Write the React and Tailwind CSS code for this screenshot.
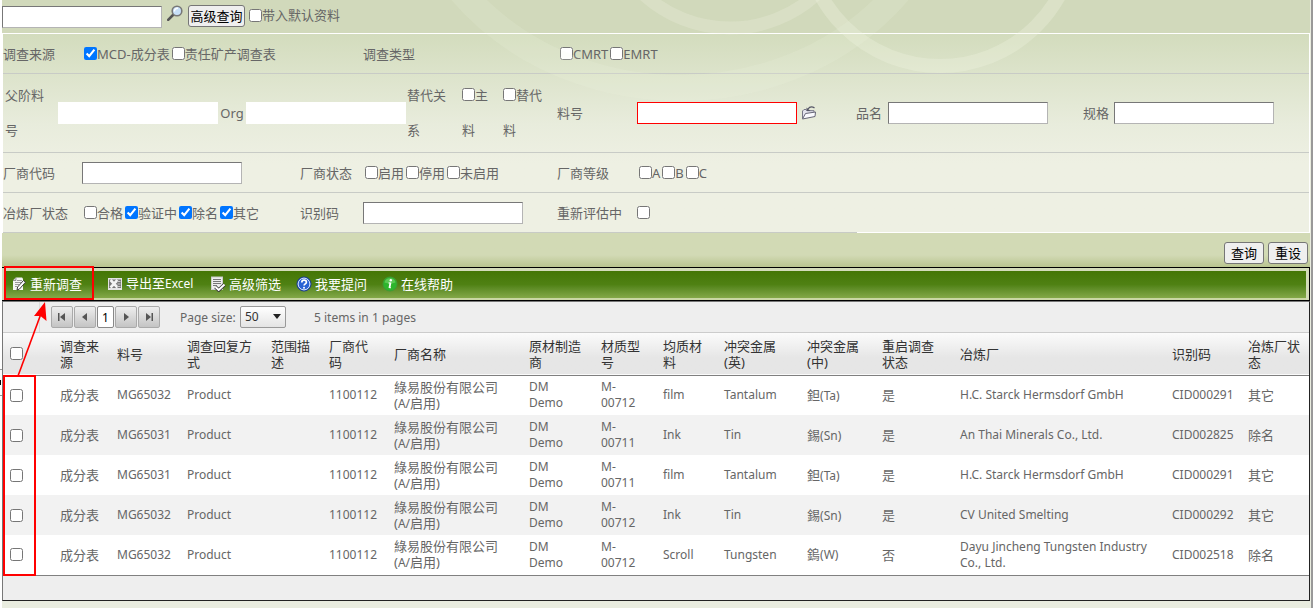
import React from "react";

const L = ({ children }) => <span className="text-[12px]">{children}</span>;

function Check({ label, checked, name, className = "" }) {
  return (
    <label className={"flex items-center whitespace-nowrap " + className}>
      <input type="checkbox" defaultChecked={checked} aria-label={name} className="size-[13px] shrink-0" />
      {label}
    </label>
  );
}

function Field({ label, labelClass = "", className = "border border-t-[#777] border-l-[#777] border-b-[#b4b4b4] border-r-[#b4b4b4] h-[22px]" }) {
  return (
    <label className="flex items-center">
      <span className={"whitespace-nowrap " + labelClass}>{label}</span>
      <input type="text" className={"w-40 bg-white px-1 outline-none " + className} />
    </label>
  );
}

const Magnifier = () => (
  <svg className="size-4" viewBox="0 0 16 16" fill="none">
    <path d="M1.2 14.8 6 10" stroke="#555" strokeWidth="2.6" strokeLinecap="round" />
    <circle cx="10" cy="6" r="4.8" fill="#c8e0f8" stroke="#777" strokeWidth="1.6" />
    <path d="M7.5 6.5a3 3 0 0 1 3.5-3.2" stroke="#fff" strokeWidth="1.4" />
  </svg>
);

const Folder = () => (
  <svg className="size-4" viewBox="0 0 16 16" fill="none">
    <path d="M1.500 13.500V6L3 4.500h2l1 1.200H13v2" fill="#e4e4ee" stroke="#778" />
    <path d="M1.500 14 4.500 8.500l10-1.500-.5 4.500Z" fill="#fafaff" stroke="#667" />
    <path d="M5.500 2.500v3.500h4Z" fill="#556" />
    <path d="M7 4C8.500 1.800 11 1.500 13.500 2.800" stroke="#556" strokeWidth="1.300" />
  </svg>
);

const EditIcon = () => (
  <svg className="size-4" viewBox="0 0 16 16" fill="none">
    <path d="M5 1.500h6l1 1V14H2V4.500Z" fill="#f4f4f4" />
    <path d="M5 1.500V4.500H2" fill="#ccc" stroke="#777" strokeWidth=".7" />
    <path d="M6 4.500h5M4 6.500h6M4 8.500h4M4 10.500h2" stroke="#999" />
    <path d="m6 14 .6-3L12.500 4.500l2 1.700-6 6.800Z" fill="#fff" stroke="#3c3c3c" strokeWidth="1" />
  </svg>
);

const ExcelIcon = () => (
  <svg className="size-4" viewBox="0 0 16 16" fill="none">
    <rect x="1" y="2" width="14" height="12" fill="#e4e4e4" />
    <rect x="2" y="3.500" width="12" height="8.500" fill="#777" />
    <path d="m3.500 4 7 7.500M10.500 4l-7 7.500" stroke="#f4f4f4" strokeWidth="2.600" />
    <path d="M10 5.500h3.500M10.500 8h3M10 10.500h3.500" stroke="#ccc" />
  </svg>
);

const FilterIcon = () => (
  <svg className="size-4" viewBox="0 0 16 16" fill="none">
    <rect x="1.500" y="1" width="11" height="12.500" fill="#eee" stroke="#ccc" />
    <path d="M3 3.500h8M3 5.500h8M3 7.500h8M3 9.500h4" stroke="#777" />
    <path d="m5.500 11 3.200 3L14.500 8.500" stroke="#333" strokeWidth="3.600" />
    <path d="m5.500 11 3.200 3L14.500 8.500" stroke="#fff" strokeWidth="2" />
  </svg>
);

const HelpIcon = () => (
  <svg className="size-4" viewBox="0 0 16 16" fill="none">
    <circle cx="8" cy="8" r="7" fill="#2a62d4" stroke="#15368a" />
    <circle cx="8" cy="8" r="5.900" stroke="#dfe9ff" strokeWidth="1" />
    <path d="M5.800 6.400c0-3 4.600-2.800 4.600-.2 0 1.700-2.200 1.600-2.300 3.300" stroke="#fff" strokeWidth="1.700" />
    <circle cx="8" cy="11.700" r="1" fill="#fff" />
  </svg>
);

const InfoIcon = () => (
  <svg className="size-4" viewBox="0 0 16 16" fill="none">
    <circle cx="8" cy="8" r="7" fill="#2db52d" stroke="#3f9a35" />
    <path d="M2.500 6.500a5.700 5.700 0 0 1 11 0c-4 1.500-7 1.500-11 0Z" fill="#5cc955" />
    <circle cx="8.800" cy="4.200" r="1.200" fill="#fff" />
    <path d="M8.500 6.500 7.400 12" stroke="#fff" strokeWidth="1.800" />
    <path d="M6.500 7h1.500M7.500 11.700h1.500" stroke="#fff" strokeWidth=".9" />
  </svg>
);

function PagerButton({ name, d }) {
  return (
    <button type="button" aria-label={name} className="flex h-[22px] w-[22px] items-center justify-center rounded-xs border border-[#aaa] bg-linear-to-b from-[#eee] to-[#c4c4c4]">
      <svg className="size-[10px]" viewBox="0 0 10 10" fill="#555"><path d={d} /></svg>
    </button>
  );
}

const tools = [
  ["重新调查", EditIcon, "w-[96px]"],
  [<>导出至<L>Excel</L></>, ExcelIcon, "w-[103px]"],
  ["高级筛选", FilterIcon, "w-[86px]"],
  ["我要提问", HelpIcon, "w-[86px]"],
  ["在线帮助", InfoIcon, "w-[86px]"],
];

const cols = [
  ["", "w-[50px]"],
  ["调查来源", "w-[57px]"],
  ["料号", "w-[70px]"],
  ["调查回复方式", "w-[84px]"],
  ["范围描述", "w-[58px]"],
  ["厂商代码", "w-[65px]"],
  ["厂商名称", "w-[135px]"],
  ["原材制造商", "w-[72px]"],
  ["材质型号", "w-[62px]"],
  ["均质材料", "w-[61px]"],
  ["冲突金属(英)", "w-[83px]"],
  ["冲突金属(中)", "w-[75px]"],
  ["重启调查状态", "w-[78px]"],
  ["冶炼厂", ""],
  ["识别码", "w-[76px]"],
  ["冶炼厂状态", "w-[68px]"],
];

const rows = [
  ["MG65032", "00712", "film", "Tantalum", "鉭", "Ta", "是", "H.C. Starck Hermsdorf GmbH", "CID000291", "其它"],
  ["MG65031", "00711", "Ink", "Tin", "錫", "Sn", "是", "An Thai Minerals Co., Ltd.", "CID002825", "除名"],
  ["MG65031", "00711", "film", "Tantalum", "鉭", "Ta", "是", "H.C. Starck Hermsdorf GmbH", "CID000291", "其它"],
  ["MG65032", "00712", "Ink", "Tin", "錫", "Sn", "是", "CV United Smelting", "CID000292", "其它"],
  ["MG65032", "00712", "Scroll", "Tungsten", "鎢", "W", "否", "Dayu Jincheng Tungsten Industry Co., Ltd.", "CID002518", "除名"],
];

const btn = "h-[22px] rounded-[3px] border border-[#767676] bg-[#efefef] text-black";

function SearchBar() {
  return (
    <div className="relative flex h-[33px] items-start bg-[#d1d9bb] pt-[5px]">
      <input type="text" aria-label="查询" className="mt-px h-[22px] w-40 border border-t-[#777] border-l-[#777] border-b-[#b4b4b4] border-r-[#b4b4b4] bg-white px-1 outline-none" />
      <button type="button" aria-label="搜索" className="ml-[5px]"><Magnifier /></button>
      <button type="button" className={btn + " ml-[5px] w-[57px]"}>高级查询</button>
      <Check label="带入默认资料" className="ml-1 h-5" />
    </div>
  );
}

function Swirls() {
  return (
    <svg className="pointer-events-none absolute top-0 left-0 h-[120px] w-[1308px]" viewBox="0 0 1308 120" fill="none" stroke="#f4f8e6">
      <ellipse cx="678" cy="-150" rx="272" ry="238" strokeWidth="26" strokeOpacity=".15" />
      <circle cx="728" cy="-100" r="128" strokeWidth="13" strokeOpacity=".22" />
      <circle cx="938" cy="-70" r="136" strokeWidth="14" strokeOpacity=".28" />
    </svg>
  );
}

function Criteria() {
  return (
    <div className="border-x border-white bg-linear-to-b from-[#d3dcbd] via-[#e8ecdc] via-45% to-[#eef0e3] to-65%">
      <div className="flex h-10 items-center border-b border-[#c8cbc6]">
        <span className="w-[81px]">调查来源</span>
        <div className="flex w-[279px] gap-0.5">
          <Check label="MCD-成分表" checked />
          <Check label="责任矿产调查表" />
        </div>
        <span className="w-[197px]">调查类型</span>
        <div className="flex gap-0.5">
          <Check label="CMRT" />
          <Check label="EMRT" />
        </div>
      </div>

      <div className="flex h-[79px] items-center border-b border-[#c8cbc6]">
        <label className="flex items-center pl-0.5">
          <span className="w-[53px] pr-3 leading-[35px]">父阶料号</span>
          <input type="text" className="h-[22px] w-40 bg-white px-1 outline-none" />
        </label>
        <label className="flex items-center">
          <span className="w-7 text-center">Org</span>
          <input type="text" className="h-[22px] w-40 bg-white px-1 outline-none" />
        </label>
        <div className="flex w-[151px] items-start pl-px leading-[35px]">
          <span className="w-[55px] pr-4">替代关系</span>
          <label className="w-[41px]"><input type="checkbox" className="size-[13px] align-[-1px]" />主<br />料</label>
          <label className="w-[54px]"><input type="checkbox" className="size-[13px] align-[-1px]" />替代<br />料</label>
        </div>
        <Field label="料号" labelClass="w-20" className="h-[22px] border border-[#f00]" />
        <button type="button" aria-label="选择料号" className="mr-[39px] ml-1"><Folder /></button>
        <Field label="品名" labelClass="w-8" />
        <div className="w-[35px]" />
        <Field label="规格" labelClass="w-[31px]" />
      </div>

      <div className="flex h-10 items-center border-b border-[#c8cbc6]">
        <div className="w-[297px]"><Field label="厂商代码" labelClass="w-[79px]" /></div>
        <span className="w-[65px]">厂商状态</span>
        <div className="flex w-[192px] gap-0.5">
          <Check label="启用" />
          <Check label="停用" />
          <Check label="未启用" />
        </div>
        <span className="w-[82px]">厂商等级</span>
        <div className="flex gap-0.5">
          <Check label="A" />
          <Check label="B" />
          <Check label="C" />
        </div>
      </div>

      <div className="flex h-[39px] items-center">
        <span className="w-[81px]">冶炼厂状态</span>
        <div className="flex w-[216px] gap-0.5">
          <Check label="合格" />
          <Check label="验证中" checked />
          <Check label="除名" checked />
          <Check label="其它" checked />
        </div>
        <div className="w-[257px]"><Field label="识别码" labelClass="w-[63px]" /></div>
        <label className="flex items-center">
          <span className="w-20">重新评估中</span>
          <input type="checkbox" className="size-[13px]" />
        </label>
      </div>
      <div className="flex h-px bg-white"><div className="w-[854px] bg-[#c8cbc6]" /></div>
    </div>
  );
}

function Toolbar() {
  return (
    <div className="-ml-px border border-black bg-[#d3dbb9] px-[3px] pt-[3px]">
      <div className="flex h-[27px] items-center bg-linear-to-b from-[#447605] via-[#4f8113] via-50% to-[#83a848] pb-0.5 pl-1.5 text-white">
        {tools.map(([label, Icon, width], i) => (
          <button key={i} type="button" className={"flex items-center gap-[3px] whitespace-nowrap " + width}>
            <Icon />
            <span>{label}</span>
          </button>
        ))}
      </div>
      <div className="h-0.5 bg-[#c9d6a4]" />
    </div>
  );
}

function Pager() {
  return (
    <div className="flex h-[31px] items-center border-b border-[#ccc] bg-[#eee]">
      <div className="h-full w-[37px] border-r border-[#ddd]" />
      <div className="ml-[11px] flex gap-px">
        <PagerButton name="首页" d="M1 1h1.500v8H1zM8 1v8L3 5z" />
        <PagerButton name="上一页" d="M7 1v8L2 5z" />
        <button type="button" className="h-[22px] w-[17px] rounded-xs border border-[#888] bg-white text-black"><L>1</L></button>
        <PagerButton name="下一页" d="M3 1v8l5-4z" />
        <PagerButton name="末页" d="M7.500 1H9v8H7.500zM2 1v8l5-4z" />
      </div>
      <label className="ml-5 flex items-center">
        <span className="w-[60px]"><L>Page size:</L></span>
        <span className="relative">
          <select defaultValue="50" className="h-[22px] w-[46px] appearance-none rounded-xs border border-[#999] bg-linear-to-b from-white to-[#e4e4e4] pl-1 text-[12px] text-[#333]">
            <option>10</option>
            <option>50</option>
          </select>
          <svg className="pointer-events-none absolute top-2 right-[5px] h-[5px] w-2" viewBox="0 0 8 5"><path d="M0 0h8L4 5z" fill="#222" /></svg>
        </span>
      </label>
      <span className="ml-7"><L>5 items in 1 pages</L></span>
    </div>
  );
}

function Grid() {
  return (
    <div className="border-t border-r border-b border-l border-t-[#777] border-r-[#222] border-b-[#222] border-l-[#777] bg-[#eee]">
      <Pager />
      <table className="w-full table-fixed border-collapse border-b border-[#808080] bg-white text-left leading-4">
        <thead>
          <tr className="h-[42px] border-b border-[#808080] bg-linear-to-b from-[#fbfbfb] to-[#e6e6e6] to-60% text-[#333]">
            {cols.map(([label, width], i) => (
              <th key={i} scope="col" className={"px-[7px] font-normal " + width}>
                {i === 0 ? <input type="checkbox" aria-label="全选" className="block size-[13px]" /> : label}
              </th>
            ))}
          </tr>
        </thead>
        <tbody>
          {rows.map(([part, material, homo, en, zh, sym, again, smelter, code, status], i) => (
            <tr key={i} className="h-10 even:bg-[#f2f2f2] [&>td]:px-[7px]">
              <td><input type="checkbox" aria-label={"选择第" + (i + 1) + "行"} className="block size-[13px]" /></td>
              <td>成分表</td>
              <td className="text-[12px]">{part}</td>
              <td className="text-[12px]">Product</td>
              <td></td>
              <td className="text-[12px]">1100112</td>
              <td>綠易股份有限公司<br />(<L>A/</L>启用)</td>
              <td className="text-[12px]">DM<br />Demo</td>
              <td className="text-[12px]">M-<br />{material}</td>
              <td className="text-[12px]">{homo}</td>
              <td className="text-[12px]">{en}</td>
              <td>{zh}<L>({sym})</L></td>
              <td>{again}</td>
              <td className="text-[12px]">{smelter}</td>
              <td className="text-[12px]">{code}</td>
              <td>{status}</td>
            </tr>
          ))}
        </tbody>
      </table>
      <div className="h-6" />
    </div>
  );
}

function Annotations() {
  return (
    <svg className="pointer-events-none absolute top-0 left-0 h-[608px] w-[100px]" viewBox="0 0 100 608" fill="none">
      <rect x="5" y="267" width="88" height="32" stroke="#f00" strokeWidth="2" />
      <rect x="4" y="376" width="31" height="199" stroke="#f00" strokeWidth="2" />
      <path d="M18 376 42 311" stroke="#f00" strokeWidth="1.600" />
      <path d="M45 302 46.500 321 40.500 316 34 316Z" fill="#f00" />
      <path d="M0 369.500h2M0 395.500h2" stroke="#999" />
      <path d="M0 380h1v5H0z" fill="#000" />
    </svg>
  );
}

export default function App() {
  return (
    <div className="relative min-h-screen border-r-2 border-[#999] bg-[#e9ecdf] pl-0.5 font-['Noto_Sans','Noto_Sans_CJK_SC',sans-serif] text-[13px] leading-4 text-[#666]">
      <div className="absolute inset-y-0 left-0 w-0.5 bg-white" />
      <div className="mr-px">
        <div className="relative">
          <SearchBar />
          <div className="h-px bg-white" />
          <Criteria />
          <Swirls />
        </div>
        <div className="flex h-[34px] items-start justify-end gap-1 bg-linear-to-b from-[#d2dab5] from-65% to-[#b9c48f] pt-[9px] pr-0.5">
          <button type="button" className={btn + " w-10"}>查询</button>
          <button type="button" className={btn + " w-10"}>重设</button>
        </div>
        <Toolbar />
        <Grid />
      </div>
      <Annotations />
    </div>
  );
}
